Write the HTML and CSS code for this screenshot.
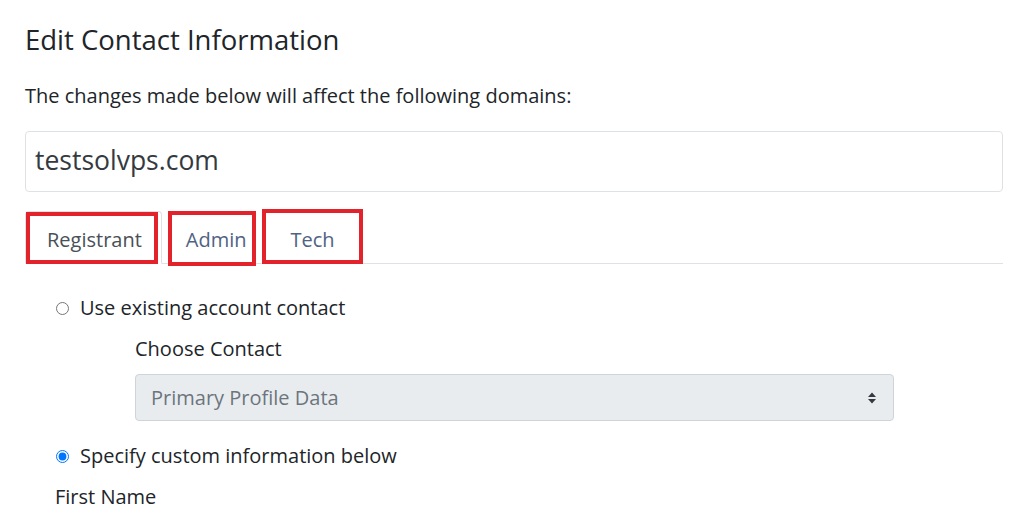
FILE: index.html
```html
<!DOCTYPE html>
<html lang="en">
<head>
<meta charset="utf-8">
<title>Edit Contact Information</title>
<link rel="stylesheet" href="styles.css">
</head>
<body>
<div class="page">
  <h1 class="title">Edit Contact Information</h1>
  <p class="intro">The changes made below will affect the following domains:</p>
  <div class="domains">testsolvps.com</div>
  <ul class="tabs">
    <li class="tab active"><a class="tab-link">Registrant</a><span class="mark mark-reg"></span></li>
    <li class="tab"><a class="tab-link">Admin</a><span class="mark mark-admin"></span></li>
    <li class="tab tab-last"><a class="tab-link">Tech</a><span class="mark mark-tech"></span></li>
  </ul>
  <div class="pane">
    <label class="radio-row"><input type="radio" name="ct" class="radio"> Use existing account contact</label>
    <div class="existing">
      <div class="field-label">Choose Contact</div>
      <div class="select">
        <span>Primary Profile Data</span>
        <svg class="caret" width="10" height="14" viewBox="0 0 10 14"><path d="M1 6 L5 1.5 L9 6 Z M1 8 L5 12.5 L9 8 Z" fill="#343a40"/></svg>
      </div>
    </div>
    <label class="radio-row second"><input type="radio" name="ct" class="radio" checked> Specify custom information below</label>
    <div class="field-label first">First Name</div>
  </div>
</div>
</body>
</html>
```
FILE: styles.css
```css
html, body { margin: 0; padding: 0; background: #fff; }
body { font-family: "Open Sans", "Noto Sans", sans-serif; color: #212529; }
.page { padding: 0 25px; width: 978px; }
.title { font-size: 27.5px; font-weight: 400; margin: 0; padding-top: 21px; line-height: 38px; color: #212529; }
.intro { font-size: 20px; margin: 23px 0 0; line-height: 28px; color: #212529; }
.domains { margin-top: 21px; height: 59px; border: 1px solid #dee2e6; border-radius: 4px; font-size: 26.5px; line-height: 57px; padding-left: 9px; color: #343a40; box-sizing: content-box; }
.tabs { list-style: none; margin: 19px 0 0; padding: 0; display: flex; gap: 0; border-bottom: 1px solid #dee2e6; height: 52px; }
.tab { position: relative; margin-bottom: -1px; }
.tab-link { display: block; padding: 0 21px; height: 52px; line-height: 56px; font-size: 20px; color: #4f6384; border: 1px solid transparent; border-radius: 4px 4px 0 0; box-sizing: border-box; }
.tab.active .tab-link { color: #495057; border-color: #dee2e6 #dee2e6 #fff; background: #fff; height: 53px; padding-right: 19px; }
.mark { position: absolute; border: 4px solid #e3232c; box-sizing: border-box; pointer-events: none; }
.mark-reg { left: 1px; top: 1px; width: 132px; height: 52px; }
.mark-admin { left: 6px; top: 0; width: 88px; height: 55px; }
.mark-tech { left: -7px; top: -2px; width: 101px; height: 55px; }
.tab + .tab .tab-link { padding-left: 23px; }
.tab.tab-last .tab-link { padding-left: 21px; }
.pane { padding-left: 30px; padding-top: 30px; }
.radio-row { display: flex; align-items: center; font-size: 20px; line-height: 28px; color: #212529; }
.radio { width: 13px; height: 13px; margin: 0 11px 0 1px; }
.existing { padding-left: 80px; }
.field-label { font-size: 20px; line-height: 28px; margin-top: 13px; color: #212529; }
.select { margin-top: 11px; height: 47px; width: 759px; box-sizing: border-box; border: 1px solid #ced4da; border-radius: 4px; background: #e9ecef; display: flex; align-items: center; justify-content: space-between; padding: 0 16px 0 15px; font-size: 20px; color: #6c757d; }
.caret { display: block; }
.radio-row.second { margin-top: 21px; }
.field-label.first { margin-top: 13px; }
```
